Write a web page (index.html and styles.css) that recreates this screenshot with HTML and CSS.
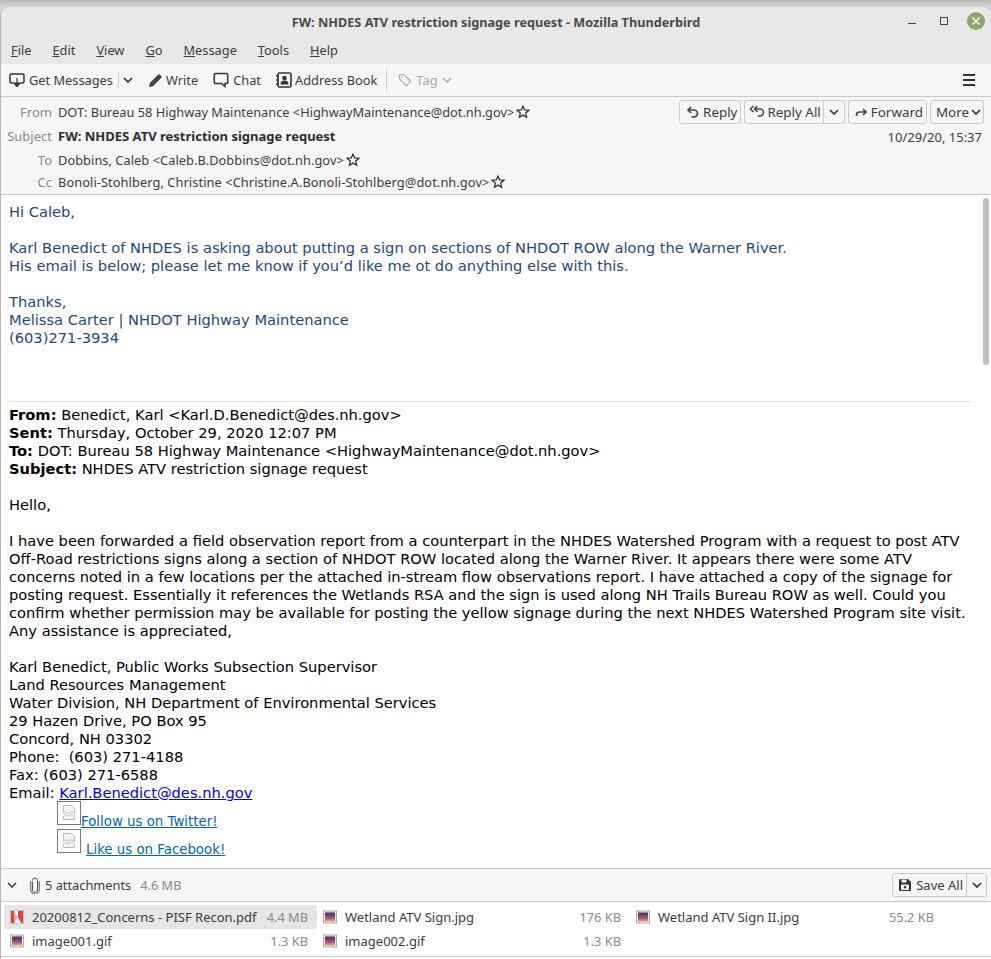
FILE: index.html
```html
<!DOCTYPE html>
<html lang="en">
<head>
<meta charset="utf-8">
<title>FW: NHDES ATV restriction signage request - Mozilla Thunderbird</title>
<link rel="stylesheet" href="styles.css">
</head>
<body>
<div class="window">
  <header class="titlebar">
    <div class="title">FW: NHDES ATV restriction signage request - Mozilla Thunderbird</div>
    <div class="winbtns">
      <svg class="wb" width="16" height="16" viewBox="0 0 16 16"><path d="M3 10.500h8" stroke="#444" fill="none"/></svg>
      <svg class="wb" width="16" height="16" viewBox="0 0 16 16"><rect x="4.500" y="4.500" width="7" height="7" stroke="#444" fill="none"/></svg>
      <svg class="wb wb-close" width="18" height="18" viewBox="0 0 18 18"><circle cx="9" cy="9" r="9" fill="#87a96b"/><path d="M5.500 5.500l7 7M12.500 5.500l-7 7" stroke="#f0f4ea" stroke-width="1.500" fill="none"/></svg>
    </div>
  </header>
  <nav class="menubar">
    <span class="menu"><u>F</u>ile</span><span class="menu"><u>E</u>dit</span><span class="menu"><u>V</u>iew</span><span class="menu"><u>G</u>o</span><span class="menu"><u>M</u>essage</span><span class="menu"><u>T</u>ools</span><span class="menu"><u>H</u>elp</span>
  </nav>
  <div class="toolbar">
    <div class="tb tb-get">
      <svg width="16" height="16" viewBox="0 0 16 16"><path d="M4.500 11H2.500A1.500 1.500 0 0 1 1 9.500v-6A1.500 1.500 0 0 1 2.500 2h11A1.500 1.500 0 0 1 15 3.500v6a1.500 1.500 0 0 1-1.500 1.500h-2" fill="none" stroke="#333" stroke-width="1.500"/><path d="M8 6v7M5 11l3 3.500 3-3.500z" fill="#333" stroke="#333" stroke-width="1.200"/></svg>
      <span>Get Messages</span><i class="sep"></i>
      <svg class="chev" width="10" height="8" viewBox="0 0 10 8"><path d="M1 2l4 4 4-4" fill="none" stroke="#333" stroke-width="1.700"/></svg>
    </div>
    <div class="tb tb-write">
      <svg width="15" height="15" viewBox="0 0 15 15"><path d="M1 14l.8-4L10 1.800a1.500 1.500 0 0 1 2 0l1.200 1.200a1.500 1.500 0 0 1 0 2L5 13.200z" fill="#444"/></svg>
      <span>Write</span>
    </div>
    <div class="tb tb-chat">
      <svg width="16" height="16" viewBox="0 0 16 16"><path d="M2.500 1.500h11a1.200 1.200 0 0 1 1.200 1.200v7.600a1.200 1.200 0 0 1-1.200 1.200H12v3l-3.500-3h-6a1.200 1.200 0 0 1-1.200-1.200V2.700a1.200 1.200 0 0 1 1.200-1.200z" fill="none" stroke="#333" stroke-width="1.500"/></svg>
      <span>Chat</span>
    </div>
    <div class="tb tb-book">
      <svg width="16" height="16" viewBox="0 0 16 16"><rect x="2" y="1" width="13" height="14" rx="1.500" fill="none" stroke="#333" stroke-width="1.600"/><path d="M0 4h3M0 8h3M0 12h3" stroke="#333" stroke-width="1.400"/><circle cx="8.500" cy="6" r="2.300" fill="#333"/><path d="M4.500 12.500c0-3 1.500-4 4-4s4 1 4 4z" fill="#333"/></svg>
      <span>Address Book</span>
    </div>
    <i class="tsep"></i>
    <div class="tb tb-tag">
      <svg width="14" height="16" viewBox="0 0 16 16"><path d="M1.500 2h5.500l7.500 7.500-5 5L2 7z" fill="none" stroke="#aaa" stroke-width="1.300"/><circle cx="4.500" cy="4.800" r=".9" fill="#aaa"/></svg>
      <span>Tag</span>
      <svg class="chev" width="10" height="8" viewBox="0 0 10 8"><path d="M1 2l4 4 4-4" fill="none" stroke="#aaa" stroke-width="1.500"/></svg>
    </div>
    <svg class="hamb" width="14" height="14" viewBox="0 0 14 14"><path d="M1 2h12M1 7h12M1 12h12" stroke="#333" stroke-width="2"/></svg>
  </div>
  <section class="headers">
    <div class="actions">
      <div class="actions-row">
        <span class="btn btn-reply"><svg width="14" height="14" viewBox="0 0 14 14"><path d="M5 2L2 5l3 3M2.500 5H8a3.500 3.500 0 0 1 0 7H5.500" fill="none" stroke="#444" stroke-width="1.700"/></svg>Reply</span>
        <span class="btn btn-split"><span class="btn-main"><svg width="18" height="14" viewBox="0 0 18 14"><path d="M4.500 1L1.500 4l3 3M8.500 1l-3 3 3 3M6 4h5a3.500 3.500 0 0 1 0 7H9" fill="none" stroke="#444" stroke-width="1.500"/></svg>Reply All</span><span class="btn-drop"><svg width="10" height="8" viewBox="0 0 10 8"><path d="M1 2l4 4 4-4" fill="none" stroke="#333" stroke-width="1.700"/></svg></span></span>
        <span class="btn btn-fwd"><svg width="14" height="14" viewBox="0 0 14 14"><path d="M9 4l3 3-3 3M11.500 7H5.500A3 3 0 0 0 2.500 10v1" fill="none" stroke="#444" stroke-width="1.700"/></svg>Forward</span>
        <span class="btn btn-more">More<svg width="10" height="8" viewBox="0 0 10 8"><path d="M1 2l4 4 4-4" fill="none" stroke="#333" stroke-width="1.700"/></svg></span>
      </div>
      <div class="date">10/29/20, 15:37</div>
    </div>
    <div class="hrow hrow-from"><span class="hlabel">From</span><span class="hval">DOT: Bureau 58 Highway Maintenance &lt;HighwayMaintenance@dot.nh.gov&gt;</span><svg class="star" width="14" height="14" viewBox="0 0 14 14"><path d="M7 1.200l1.700 3.800 4.100.4-3.100 2.700.9 4.100L7 10.100l-3.600 2.100.9-4.100L1.200 5.400l4.100-.4z" fill="none" stroke="#333" stroke-width="1.300"/></svg></div>
    <div class="hrow hrow-subj"><span class="hlabel">Subject</span><span class="hval hval-subj">FW: NHDES ATV restriction signage request</span></div>
    <div class="hrow hrow-to"><span class="hlabel">To</span><span class="hval hval-to">Dobbins, Caleb &lt;Caleb.B.Dobbins@dot.nh.gov&gt;</span><svg class="star" width="14" height="14" viewBox="0 0 14 14"><path d="M7 1.200l1.700 3.800 4.100.4-3.100 2.700.9 4.100L7 10.100l-3.600 2.100.9-4.100L1.200 5.400l4.100-.4z" fill="none" stroke="#333" stroke-width="1.300"/></svg></div>
    <div class="hrow hrow-cc"><span class="hlabel">Cc</span><span class="hval hval-cc">Bonoli-Stohlberg, Christine &lt;Christine.A.Bonoli-Stohlberg@dot.nh.gov&gt;</span><svg class="star" width="14" height="14" viewBox="0 0 14 14"><path d="M7 1.200l1.700 3.800 4.100.4-3.100 2.700.9 4.100L7 10.100l-3.600 2.100.9-4.100L1.200 5.400l4.100-.4z" fill="none" stroke="#333" stroke-width="1.300"/></svg></div>
  </section>
  <main class="message">
    <div class="scrollthumb"></div>
    <p class="blue">Hi Caleb,</p>
    <p class="blue">&nbsp;</p>
    <p class="blue">Karl Benedict of NHDES is asking about putting a sign on sections of NHDOT ROW along the Warner River.</p>
    <p class="blue">His email is below; please let me know if you’d like me ot do anything else with this.</p>
    <p class="blue">&nbsp;</p>
    <p class="blue">Thanks,</p>
    <p class="blue">Melissa Carter | NHDOT Highway Maintenance</p>
    <p class="blue">(603)271-3934</p>
    <p class="blue">&nbsp;</p>
    <p class="blue">&nbsp;</p>
    <p class="blue">&nbsp;</p>
    <div class="rule"></div>
    <p><b>From:</b> Benedict, Karl &lt;Karl.D.Benedict@des.nh.gov&gt;</p>
    <p><b>Sent:</b> Thursday, October 29, 2020 12:07 PM</p>
    <p><b>To:</b> DOT: Bureau 58 Highway Maintenance &lt;HighwayMaintenance@dot.nh.gov&gt;</p>
    <p><b>Subject:</b> NHDES ATV restriction signage request</p>
    <p>&nbsp;</p>
    <p>Hello,</p>
    <p>&nbsp;</p>
    <p>I have been forwarded a field observation report from a counterpart in the NHDES Watershed Program with a request to post ATV<br>Off-Road restrictions signs along a section of NHDOT ROW located along the Warner River. It appears there were some ATV<br>concerns noted in a few locations per the attached in-stream flow observations report. I have attached a copy of the signage for<br>posting request. Essentially it references the Wetlands RSA and the sign is used along NH Trails Bureau ROW as well. Could you<br>confirm whether permission may be available for posting the yellow signage during the next NHDES Watershed Program site visit.<br>Any assistance is appreciated,</p>
    <p>&nbsp;</p>
    <p>Karl Benedict, Public Works Subsection Supervisor</p>
    <p>Land Resources Management</p>
    <p>Water Division, NH Department of Environmental Services</p>
    <p>29 Hazen Drive, PO Box 95</p>
    <p>Concord, NH 03302</p>
    <p>Phone:&nbsp; (603) 271-4188</p>
    <p>Fax: (603) 271-6588</p>
    <p>Email: <a class="link-mail" href="#">Karl.Benedict@des.nh.gov</a></p>
    <div class="social">
      <svg class="broken" width="24" height="24" viewBox="0 0 24 24"><rect x=".5" y=".5" width="23" height="23" fill="#fff" stroke="#777"/><path d="M6.500 4.500h8l3 3v5l-3-2-3 2-3-1.500-2 1.500zM6.500 15l2-1.500 3 1.500 3-2 3 2v3.500h-11z" fill="#f4f4f4" stroke="#bbb"/></svg>
      <a class="link-soc" href="#">Follow us on Twitter!</a>
    </div>
    <div class="social">
      <svg class="broken" width="24" height="24" viewBox="0 0 24 24"><rect x=".5" y=".5" width="23" height="23" fill="#fff" stroke="#777"/><path d="M6.500 4.500h8l3 3v5l-3-2-3 2-3-1.500-2 1.500zM6.500 15l2-1.500 3 1.500 3-2 3 2v3.500h-11z" fill="#f4f4f4" stroke="#bbb"/></svg>
      <a class="link-soc link-fb" href="#">Like us on Facebook!</a>
    </div>
  </main>
  <section class="attbar">
    <svg class="attchev" width="10" height="8" viewBox="0 0 10 8"><path d="M1 2l4 4 4-4" fill="none" stroke="#333" stroke-width="1.500"/></svg>
    <svg class="clip" width="10" height="17" viewBox="0 0 10 17"><path d="M2.500 4.500v8.500a2.500 2.500 0 0 0 5 0V3.500a2.500 2.500 0 0 0-5 0M.8 4v9a4.200 4.200 0 0 0 8.400 0V4" fill="none" stroke="#555" stroke-width="1"/></svg>
    <span class="attcount">5 attachments</span><span class="attsize">4.6 MB</span>
    <span class="saveall"><span class="save-main"><svg width="14" height="14" viewBox="0 0 14 14"><path d="M1 2.500A1.500 1.500 0 0 1 2.500 1H10l3 3v7.500a1.500 1.500 0 0 1-1.500 1.500h-9A1.500 1.500 0 0 1 1 11.500z" fill="#333"/><rect x="3.500" y="1.500" width="5" height="3" fill="#f6f6f6"/><rect x="3" y="6.500" width="8" height="5.500" rx="1" fill="#f6f6f6"/><circle cx="7" cy="9.200" r="1.200" fill="#333"/></svg>Save All</span><span class="save-drop"><svg width="10" height="8" viewBox="0 0 10 8"><path d="M1 2l4 4 4-4" fill="none" stroke="#333" stroke-width="1.700"/></svg></span></span>
  </section>
  <section class="attlist">
    <div class="att att-sel">
      <svg class="fileicon" width="14" height="14" viewBox="0 0 14 14"><rect x=".5" y=".5" width="13" height="13" fill="#fff" stroke="#c9c2bb"/><path d="M1 1h3.500v12H1zM8 1h5v12h-2L8 7z" fill="#d8483f"/><path d="M4.500 3L8 7l-3.500 6z" fill="#f0a8a2"/></svg>
      <span class="aname">20200812_Concerns - PISF Recon.pdf</span><span class="asize">4.4 MB</span>
    </div>
    <div class="att">
      <svg class="fileicon" width="14" height="14" viewBox="0 0 14 14"><use href="#imgicon"/></svg>
      <span class="aname">Wetland ATV Sign.jpg</span><span class="asize">176 KB</span>
    </div>
    <div class="att">
      <svg class="fileicon" width="14" height="14" viewBox="0 0 14 14"><use href="#imgicon"/></svg>
      <span class="aname">Wetland ATV Sign II.jpg</span><span class="asize">55.2 KB</span>
    </div>
    <div class="att">
      <svg class="fileicon" width="14" height="14" viewBox="0 0 14 14"><use href="#imgicon"/></svg>
      <span class="aname">image001.gif</span><span class="asize">1.3 KB</span>
    </div>
    <div class="att">
      <svg class="fileicon" width="14" height="14" viewBox="0 0 14 14"><use href="#imgicon"/></svg>
      <span class="aname">image002.gif</span><span class="asize">1.3 KB</span>
    </div>
  </section>
</div>
<svg class="defs" width="0" height="0">
  <defs>
    <linearGradient id="sky" x1="0" y1="0" x2="0" y2="1"><stop offset="0" stop-color="#3b2f63"/><stop offset=".6" stop-color="#a0558a"/><stop offset="1" stop-color="#e6a878"/></linearGradient>
    <g id="imgicon"><rect x=".5" y="1" width="13" height="12" fill="#efe6da" stroke="#b8ab9c"/><rect x="2" y="2.500" width="10" height="9" fill="url(#sky)"/></g>
  </defs>
</svg>
</body>
</html>
```
FILE: styles.css
```css
* { box-sizing: border-box; }
html, body { margin: 0; padding: 0; height: 100%; overflow: hidden; }
body {
  background: linear-gradient(#b9b9b9, #d2d2d2 6px);
  font-family: "Noto Sans", "Open Sans", sans-serif;
  font-size: 12.8px;
  color: #333;
  padding-top: 7px;
}
.window {
  height: 952px;
  background: #fff;
  border-top-left-radius: 9px;
  border-top-right-radius: 9px;
  overflow: hidden;
  border-left: 1px solid #b5b5b5;
  display: flex;
  flex-direction: column;
  position: relative;
}
.defs { position: absolute; }
.titlebar {
  height: 29px;
  flex: none;
  background: #e8e8e8;
  display: flex;
  align-items: center;
  justify-content: center;
  position: relative;
}
.title { font-weight: 700; color: #4a4a4a; font-size: 12.7px; }
.winbtns { position: absolute; right: 6px; top: 5px; display: flex; align-items: center; gap: 15px; }
.menubar {
  height: 28px;
  flex: none;
  background: #e8e8e8;
  display: flex;
  align-items: center;
  padding-left: 10px;
  gap: 21px;
  color: #3c3c3c;
}
.toolbar {
  height: 33px;
  flex: none;
  background: #f6f6f6;
  border-bottom: 1px solid #c9c9c9;
  display: flex;
  align-items: center;
  padding-left: 8px;
  color: #3c3c3c;
  position: relative;
}
.tb { display: flex; align-items: center; gap: 3px; }
.tb-get { gap: 4px; }
.sep { width: 1px; height: 17px; background: #ccc; margin: 0 0 0 1px; }
.tb-write { margin-left: 15px; }
.tb-chat { margin-left: 15px; gap: 4px; }
.tb-book { margin-left: 15px; }
.tsep { width: 1px; height: 24px; background: #d0d0d0; margin: 0 11px 0 9px; }
.tb-tag { color: #aaa; gap: 4px; }
.hamb { position: absolute; right: 15px; top: 9px; }
.headers {
  height: 98px;
  flex: none;
  background: #f6f6f6;
  border-bottom: 1px solid #c9c9c9;
  position: relative;
  padding-top: 4px;
}
.actions { position: absolute; right: 7px; top: 3px; display: flex; flex-direction: column; align-items: flex-end; }
.actions-row { display: flex; gap: 3px; font-size: 13.4px; }
.btn {
  height: 24px;
  border: 1px solid #cbcbcb;
  border-radius: 3px;
  background: #f6f6f6;
  display: flex;
  align-items: center;
  color: #3c3c3c;
}
.btn-reply { gap: 3px; padding: 0 3px 0 6px; }
.btn-split { padding: 0; }
.btn-main { display: flex; align-items: center; padding: 0 2px 0 4px; height: 100%; border-right: 1px solid #cbcbcb; }
.btn-drop { width: 20px; display: flex; justify-content: center; }
.btn-fwd { gap: 3px; padding: 0 3px 0 5px; }
.btn-more { gap: 2px; padding: 0 2px 0 5px; }
.date { margin: 5px 2px 0 0; line-height: 17px; color: #3c3c3c; font-size: 13px; }
.hrow { display: flex; align-items: center; }
.hlabel { width: 51px; flex: none; text-align: right; color: #8a8a8a; margin-right: 6px; font-size: 13px; }
.hrow-from { height: 22px; }
.hrow-subj { height: 26px; }
.hrow-to { height: 22px; }
.hrow-cc { height: 22px; }
.hval { white-space: nowrap; color: #3c3c3c; }
.hval-subj { font-weight: 700; color: #2e2e2e; font-size: 13px; }
.hval-to { letter-spacing: .05px; }
.hval-cc { letter-spacing: .08px; }
.star { margin-left: 2px; }
.message {
  height: 673px;
  flex: none;
  background: #fff;
  padding: 8px 0 0 8px;
  overflow: hidden;
  position: relative;
  font-family: "DejaVu Sans", sans-serif;
  font-size: 14.667px;
  line-height: 18px;
  color: #000;
}
.message p { margin: 0; white-space: nowrap; }
.message .blue { color: #1f497d; }
.message b { font-weight: 700; }
.scrollthumb { position: absolute; right: 2px; top: 3px; width: 6px; height: 167px; border-radius: 3px; background: #bfbfbf; }
.rule { height: 1px; width: 962px; background: #e1e1e1; margin: 0 0 4px; }
.link-mail { color: #0000ee; }
.social { display: flex; align-items: flex-end; height: 28px; margin-left: 48px; }
.social .broken { margin-bottom: 5px; }
.link-soc { color: #0563c1; font-size: 13.333px; margin-bottom: -1px; }
.link-fb { margin-left: 5px; }
.attbar {
  height: 34px;
  flex: none;
  background: #f6f6f6;
  border-top: 1px solid #c9c9c9;
  border-bottom: 1px solid #c9c9c9;
  display: flex;
  align-items: center;
  position: relative;
  padding-left: 6px;
  color: #3c3c3c;
}
.clip { margin-left: 13px; }
.attcount { margin-left: 5px; }
.attsize { margin-left: 9px; color: #8a8a8a; }
.saveall {
  position: absolute;
  right: 4px;
  top: 4px;
  height: 24px;
  border: 1px solid #cbcbcb;
  border-radius: 3px;
  display: flex;
  align-items: center;
  font-size: 13px;
}
.save-main { display: flex; align-items: center; gap: 4px; padding: 0 3px 0 5px; height: 100%; border-right: 1px solid #cbcbcb; }
.save-drop { width: 19px; display: flex; justify-content: center; }
.attlist {
  height: 55px;
  flex: none;
  background: #fff;
  border-bottom: 1px solid #c9c9c9;
  padding: 3px 0 0 3px;
  display: grid;
  grid-template-columns: repeat(3, 313px);
  grid-auto-rows: 24px;
  color: #3c3c3c;
}
.att { display: flex; align-items: center; padding: 0 9px 0 6px; border-radius: 2px; }
.att-sel { background: #e6e6e6; }
.fileicon { flex: none; margin-right: 8px; }
.aname { flex: 1; white-space: nowrap; font-size: 13px; }
.asize { color: #8a8a8a; white-space: nowrap; }
```
